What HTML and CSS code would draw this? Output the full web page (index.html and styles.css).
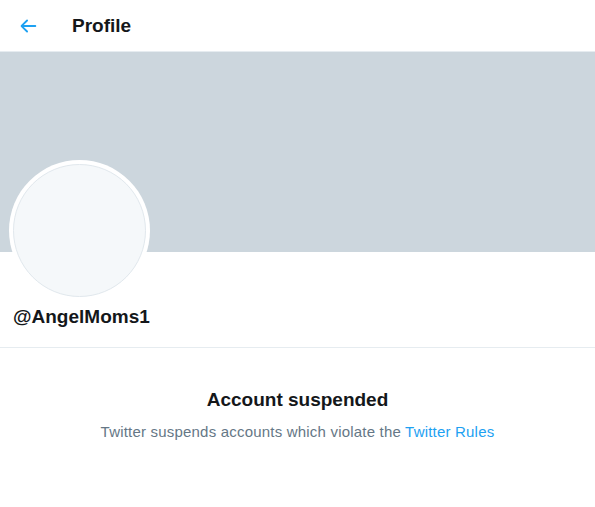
FILE: index.html
```html
<!DOCTYPE html>
<html>
<head>
<meta charset="utf-8">
<link rel="stylesheet" href="styles.css">
</head>
<body>
<div class="page">
  <header class="topbar">
    <a class="back" href="#" aria-label="Back">
      <svg viewBox="0 0 24 24" width="22" height="22"><path fill="#1da1f2" d="M20 11H7.414l4.293-4.293a1 1 0 0 0-1.414-1.414l-6 6a1 1 0 0 0 0 1.414l6 6a.997.997 0 0 0 1.414 0 1 1 0 0 0 0-1.414L7.414 13H20a1 1 0 1 0 0-2z"/></svg>
    </a>
    <h1 class="title">Profile</h1>
  </header>
  <div class="banner"></div>
  <section class="profile">
    <div class="avatar"><div class="avatar-inner"></div></div>
    <div class="handle">@AngelMoms1</div>
  </section>
  <section class="notice">
    <h2 class="notice-title">Account suspended</h2>
    <p class="notice-text">Twitter suspends accounts which violate the <a href="#" class="link">Twitter Rules</a></p>
  </section>
</div>
</body>
</html>
```
FILE: styles.css
```css
html, body {
  margin: 0;
  padding: 0;
  background: #fff;
}
body {
  font-family: "Liberation Sans", Arial, sans-serif;
  color: #14171a;
}
.page {
  width: 595px;
}
.topbar {
  height: 52px;
  display: flex;
  align-items: center;
  padding: 0 0 0 17px;
  box-sizing: border-box;
  border-bottom: 1px solid #e6ecf0;
}
.back {
  display: flex;
  align-items: center;
  width: 22px;
  height: 22px;
  margin-right: 33px;
}
.title {
  margin: 0;
  font-size: 19px;
  font-weight: 700;
  line-height: 24px;
}
.banner {
  height: 200px;
  background: #ccd6dd;
}
.profile {
  display: flex;
  flex-direction: column;
  align-items: flex-start;
  padding: 0 12px 0 9px;
  height: 95px;
  border-bottom: 1px solid #e6ecf0;
}
.avatar {
  width: 141px;
  height: 141px;
  flex: none;
  margin-top: -92px;
  border-radius: 50%;
  background: #fff;
  display: flex;
  align-items: center;
  justify-content: center;
}
.avatar-inner {
  width: 131px;
  height: 131px;
  border-radius: 50%;
  background: #f5f8fa;
  border: 1px solid #e1e8ed;
}
.handle {
  margin: 4px 0 0 4px;
  font-size: 19px;
  font-weight: 700;
  line-height: 24px;
}
.notice {
  text-align: center;
  padding-top: 40px;
}
.notice-title {
  margin: 0;
  font-size: 19px;
  font-weight: 700;
  line-height: 24px;
}
.notice-text {
  margin: 10px 0 0;
  font-size: 15px;
  letter-spacing: 0.2px;
  line-height: 20px;
  color: #657786;
}
.link {
  color: #1da1f2;
  text-decoration: none;
}
```
